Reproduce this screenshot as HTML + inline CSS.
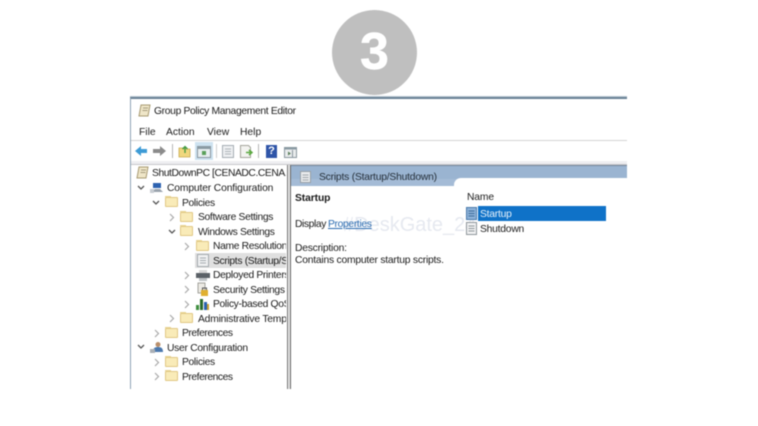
<!DOCTYPE html>
<html><head><meta charset="utf-8">
<style>
html,body{margin:0;padding:0;background:#fff}
#p{position:relative;width:758px;height:426px;overflow:hidden;background:#fff;font-family:"Liberation Sans",sans-serif}
#w{position:absolute;left:0;top:0;width:758px;height:426px;filter:blur(.4px)}
.a{position:absolute}
.t{position:absolute;margin-top:1px;font-size:10.3px;line-height:13px;color:#1a1a1a;white-space:nowrap;letter-spacing:-.33px}
.m{letter-spacing:0}
.n{letter-spacing:-.14px}
.r{letter-spacing:-.22px}
.f{position:absolute;margin-top:-1px;width:11px;height:8px;background:#f9ebb8;border:1px solid #e0c884;box-sizing:content-box;border-radius:1px}
.f:before{content:"";position:absolute;left:-1px;top:-2px;width:6px;height:1px;background:#e9d593}
svg{position:absolute;overflow:visible}
.c{fill:none;stroke:#a9a9a9;stroke-width:1.2}
.d{fill:none;stroke:#555;stroke-width:1.3}
</style></head><body><div id="p"><div id="w">

<div class="a" style="left:332px;top:10px;width:85px;height:85px;border-radius:50%;background:#bfbfbf"></div>
<div class="a" style="left:332px;top:24px;width:85px;text-align:center;font-size:52px;line-height:56px;font-weight:bold;color:#fff;-webkit-text-stroke:.5px #fff">3</div>

<!-- top border -->
<div class="a" style="left:130px;top:96px;width:497px;height:1px;background:#b9c6d2"></div>
<div class="a" style="left:130px;top:97px;width:497px;height:1.5px;background:#6a8296"></div>
<!-- left border -->
<div class="a" style="left:130px;top:98px;width:1px;height:291px;background:#8ea3b5"></div>

<!-- title -->
<svg style="left:138px;top:104px" width="13" height="13"><path d="M3 1h9l-2 11H1z" fill="#efe6c8" stroke="#a89a72"/><path d="M5 4h5M4.500 6.500h5" stroke="#8d8465" stroke-width=".8"/></svg>
<div class="t" style="left:154px;top:104px">Group Policy Management Editor</div>

<!-- menu -->
<div class="t m" style="left:139px;top:125px">File</div>
<div class="t m" style="left:166px;top:125px">Action</div>
<div class="t m" style="left:207px;top:125px">View</div>
<div class="t m" style="left:240px;top:125px">Help</div>
<div class="a" style="left:131px;top:140px;width:496px;height:1px;background:#d4d4d4"></div>

<!-- toolbar -->
<svg style="left:135px;top:145px" width="12" height="12"><path d="M0 6L6 1v3h6v4H6v3z" fill="#3d9bd6"/></svg>
<svg style="left:153px;top:145px" width="13" height="12"><path d="M13 6L7 1v3H0v4h7v3z" fill="#8b8b8b"/></svg>
<div class="a" style="left:172px;top:144px;width:1px;height:14px;background:#b5b5b5"></div>
<svg style="left:178px;top:145px" width="13" height="13"><path d="M1 3h4l1 1h6v8H1z" fill="#f0d77e" stroke="#c9a94e" stroke-width=".8"/><path d="M7 8V2M4.500 4L7 1.500 9.500 4" fill="none" stroke="#3f9a3f" stroke-width="1.300"/></svg>
<div class="a" style="left:195px;top:142px;width:18px;height:18px;background:#cde2f0"></div>
<svg style="left:197px;top:146px" width="14" height="12"><rect x=".5" y=".5" width="13" height="11" fill="#e8eef0" stroke="#8a979f"/><rect x=".5" y=".5" width="13" height="2.500" fill="#8a9aa3"/><rect x="5" y="5" width="4" height="4" fill="#5aa05a"/></svg>
<div class="a" style="left:216px;top:144px;width:1px;height:14px;background:#cfcfcf"></div>
<svg style="left:222px;top:145px" width="12" height="13"><rect x=".5" y=".5" width="11" height="12" fill="#eef0f2" stroke="#a5adb3"/><path d="M3 4h6M3 6.500h6M3 9h6" stroke="#aeb5ba"/></svg>
<svg style="left:240px;top:145px" width="14" height="13"><path d="M.5.500h8l2 2v10H.5z" fill="#f3f3f0" stroke="#a5a59c"/><path d="M6 7.500h5M9 5l3 2.500L9 10" fill="none" stroke="#5aa83f" stroke-width="1.500"/></svg>
<div class="a" style="left:258px;top:144px;width:1px;height:14px;background:#b5b5b5"></div>
<div class="a" style="left:266px;top:145px;width:11px;height:13px;background:#2f55a8;color:#fff;font-size:11px;line-height:13px;font-weight:bold;text-align:center">?</div>
<svg style="left:284px;top:147px" width="13" height="11"><rect x=".5" y=".5" width="12" height="10" fill="#e9eced" stroke="#8a979f"/><rect x=".5" y=".5" width="12" height="2" fill="#8a9aa3"/><path d="M4 4.500l3 2-3 2z" fill="#5c7f5c"/><path d="M8.500 3v7" stroke="#8a979f"/></svg>
<div class="a" style="left:131px;top:161px;width:496px;height:3px;background:#eeeef1"></div>
<div class="a" style="left:131px;top:164px;width:496px;height:1px;background:#c8c8cb"></div>

<!-- splitter -->
<div class="a" style="left:287px;top:165px;width:1px;height:224px;background:#777"></div>
<div class="a" style="left:288px;top:165px;width:2px;height:224px;background:#e6e6e6"></div>
<div class="a" style="left:290px;top:165px;width:1px;height:224px;background:#666"></div>

<!-- tree -->
<svg style="left:136px;top:166px" width="13" height="13"><path d="M3 1h9l-2 11H1z" fill="#efe6c8" stroke="#a89a72"/><path d="M5 4h5M4.500 6.500h5" stroke="#8d8465" stroke-width=".8"/></svg>
<div class="t" style="left:152px;top:166px;width:134px;overflow:hidden;letter-spacing:-.42px">ShutDownPC [CENADC.CENA.L</div>

<svg style="left:137px;top:185px" width="8" height="6"><path class="d" d="M1 1l3 3 3-3"/></svg>
<svg style="left:150px;top:181px" width="14" height="13"><path d="M3 7V2h8v5z" fill="#2d62b0"/><path d="M1 11l4-3h5l3 3z" fill="#9aa3ad"/><rect x="0" y="8" width="4" height="4" fill="#c7ccd2"/></svg>
<div class="t n" style="left:167px;top:181px">Computer Configuration</div>

<svg style="left:152px;top:200px" width="8" height="6"><path class="d" d="M1 1l3 3 3-3"/></svg>
<div class="f" style="left:165px;top:198px"></div>
<div class="t" style="left:182px;top:196px">Policies</div>

<svg style="left:169px;top:213px" width="6" height="9"><path class="c" d="M1 1l3.500 3.500L1 8"/></svg>
<div class="f" style="left:180px;top:213px"></div>
<div class="t" style="left:198px;top:210px">Software Settings</div>

<svg style="left:168px;top:229px" width="8" height="6"><path class="d" d="M1 1l3 3 3-3"/></svg>
<div class="f" style="left:180px;top:227px"></div>
<div class="t" style="left:198px;top:225px">Windows Settings</div>

<svg style="left:184px;top:242px" width="6" height="9"><path class="c" d="M1 1l3.500 3.500L1 8"/></svg>
<div class="f" style="left:196px;top:242px"></div>
<div class="t" style="left:213px;top:239px;width:73px;overflow:hidden">Name Resolution</div>

<div class="a" style="left:195px;top:253px;width:91px;height:15px;background:#e0e0e0"></div>
<svg style="left:197px;top:254px" width="12" height="13"><rect x=".5" y=".5" width="11" height="12" fill="#f0f1f2" stroke="#a3a9ae"/><path d="M3 4h6M3 6.500h6M3 9h6" stroke="#a5abb0"/></svg>
<div class="t" style="left:213px;top:254px;width:73px;overflow:hidden">Scripts (Startup/S</div>

<svg style="left:184px;top:271px" width="6" height="9"><path class="c" d="M1 1l3.500 3.500L1 8"/></svg>
<svg style="left:196px;top:270px" width="14" height="12"><rect x="3" y="0" width="8" height="3" fill="#d7d7d7"/><rect x="0" y="3" width="14" height="5" fill="#5b6167"/><rect x="3" y="8" width="8" height="3" fill="#bfc3c6"/></svg>
<div class="t" style="left:213px;top:268px;width:73px;overflow:hidden">Deployed Printers</div>

<svg style="left:184px;top:285px" width="6" height="9"><path class="c" d="M1 1l3.500 3.500L1 8"/></svg>
<svg style="left:197px;top:283px" width="12" height="14"><rect x="1" y="0" width="7" height="10" fill="#eceae4" stroke="#8f8f88" stroke-width=".8"/><rect x="4" y="7" width="7" height="6" fill="#e0b030"/><path d="M5.500 7V5h4v2" fill="none" stroke="#555"/></svg>
<div class="t" style="left:213px;top:283px">Security Settings</div>

<svg style="left:184px;top:300px" width="6" height="9"><path class="c" d="M1 1l3.500 3.500L1 8"/></svg>
<svg style="left:196px;top:298px" width="14" height="13"><rect x="0" y="7" width="3" height="5" fill="#3f8f3f"/><rect x="4" y="1" width="3" height="11" fill="#2a6a2a"/><rect x="8" y="4" width="3" height="8" fill="#2a62b0"/><rect x="11" y="6" width="2" height="6" fill="#c9a030"/></svg>
<div class="t" style="left:213px;top:297px;width:73px;overflow:hidden">Policy-based QoS</div>

<svg style="left:169px;top:314px" width="6" height="9"><path class="c" d="M1 1l3.500 3.500L1 8"/></svg>
<div class="f" style="left:180px;top:314px"></div>
<div class="t" style="left:198px;top:312px;width:88px;overflow:hidden;letter-spacing:-.2px">Administrative Templates</div>

<svg style="left:154px;top:329px" width="6" height="9"><path class="c" d="M1 1l3.500 3.500L1 8"/></svg>
<div class="f" style="left:165px;top:329px"></div>
<div class="t" style="left:182px;top:326px;letter-spacing:-.45px">Preferences</div>

<svg style="left:137px;top:344px" width="8" height="6"><path class="d" d="M1 1l3 3 3-3"/></svg>
<svg style="left:150px;top:341px" width="14" height="13"><circle cx="8" cy="3.500" r="2.500" fill="#b98f6b"/><path d="M3 11c0-4 2-5 5-5s5 1 5 5z" fill="#4b78ad"/><rect x="0" y="8" width="5" height="4" fill="#aab0b6"/></svg>
<div class="t" style="left:167px;top:341px;letter-spacing:-.28px">User Configuration</div>

<svg style="left:154px;top:358px" width="6" height="9"><path class="c" d="M1 1l3.500 3.500L1 8"/></svg>
<div class="f" style="left:165px;top:358px"></div>
<div class="t" style="left:182px;top:355px">Policies</div>

<svg style="left:154px;top:372px" width="6" height="9"><path class="c" d="M1 1l3.500 3.500L1 8"/></svg>
<div class="f" style="left:165px;top:372px"></div>
<div class="t" style="left:182px;top:370px;letter-spacing:-.45px">Preferences</div>

<!-- right pane header -->
<div class="a" style="left:291px;top:165px;width:336px;height:1px;background:#76889a"></div>
<div class="a" style="left:291px;top:166px;width:336px;height:13px;background:#9ab4d1"></div>
<div class="a" style="left:291px;top:179px;width:168px;height:7px;background:#a4bbd6"></div>
<div class="a" style="left:454px;top:178px;width:173px;height:10px;background:#fff;border-radius:7px 0 0 0"></div>
<svg style="left:300px;top:171px" width="11" height="12"><rect x=".5" y=".5" width="10" height="11" fill="#e9ebed" stroke="#98a0a6"/><path d="M2.500 4h6M2.500 6.500h6M2.500 9h6" stroke="#a0a7ac"/></svg>
<div class="t" style="left:319px;top:170px;color:#26303a;letter-spacing:-.2px">Scripts (Startup/Shutdown)</div>

<!-- right content -->
<div class="t m" style="left:295px;top:191px;font-weight:bold;letter-spacing:-.1px">Startup</div>
<div class="t r" style="left:343px;top:212px;font-size:20px;line-height:24px;color:#e6e9f0;letter-spacing:0">#DeskGate_24</div>
<div class="t" style="left:295px;top:217px;letter-spacing:-.4px">Display</div>
<div class="t" style="left:328px;top:217px;color:#2a6bb0;text-decoration:underline">Properties</div>
<div class="t r" style="left:295px;top:241px">Description:</div>
<div class="t r" style="left:295px;top:253px">Contains computer startup scripts.</div>

<div class="t n" style="left:467px;top:190px">Name</div>
<div class="a" style="left:478px;top:206px;width:128px;height:15px;background:#0f72c8"></div>
<div class="t r" style="left:480px;top:207px;color:#e8f2fb">Startup</div>
<svg style="left:466px;top:207px" width="11" height="13"><rect x=".5" y=".5" width="10" height="12" fill="#8db2d8" stroke="#4a7aab"/><path d="M2.500 4h6M2.500 6.500h6M2.500 9h6" stroke="#3f6d9c"/></svg>
<div class="t r" style="left:480px;top:222px">Shutdown</div>
<svg style="left:466px;top:222px" width="11" height="13"><rect x=".5" y=".5" width="10" height="12" fill="#f0f1f2" stroke="#8f969b"/><path d="M2.500 4h6M2.500 6.500h6M2.500 9h6" stroke="#8f969b"/></svg>

</div></div></body></html>
